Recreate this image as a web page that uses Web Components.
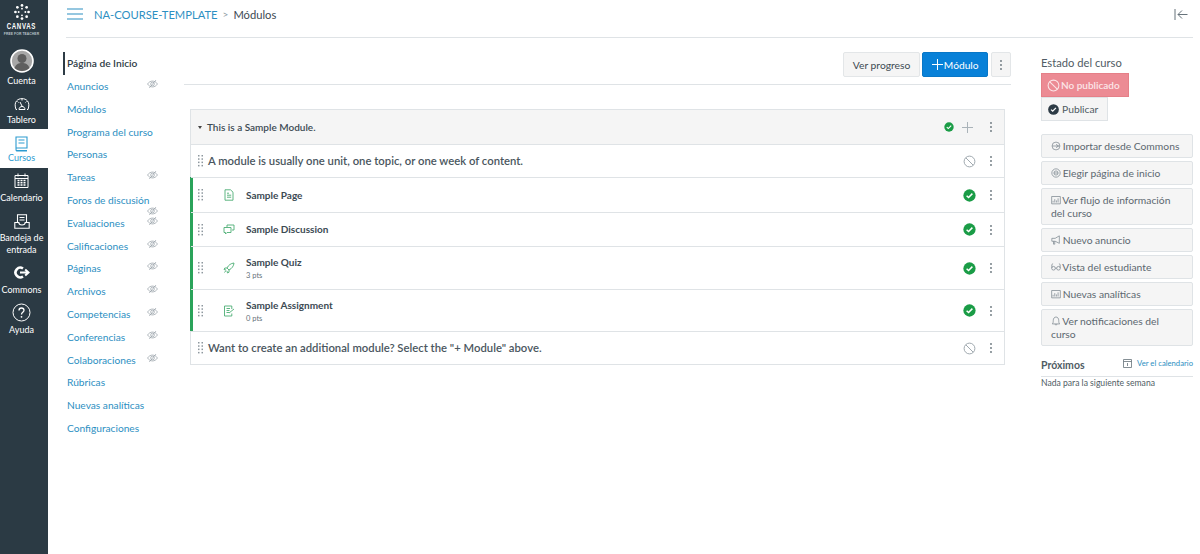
<!DOCTYPE html>
<html lang="es"><head><meta charset="utf-8"><title>Módulos</title>
<style>
html,body{margin:0;height:100%;background:#fff;font-family:Lato,"Open Sans",sans-serif;color:#2d3b45;overflow:hidden}
</style></head><body>
<app-shell>
  <global-nav slot="global"></global-nav>
  <course-header slot="header"></course-header>
  <course-nav slot="nav"></course-nav>
  <modules-main slot="main"></modules-main>
  <course-aside slot="aside"></course-aside>
</app-shell>
<script>
const I={
 eye:`<svg viewBox="0 0 12 10" width="11" height="10" fill="none" stroke="#98a2a9" stroke-width=".8"><path d="M.6 5C2 2.800 4 1.800 6 1.800S10 2.800 11.400 5C10 7.200 8 8.200 6 8.200S2 7.200.6 5Z"/><circle cx="6" cy="5" r="2"/><path d="M2.500 9.300 9.800.7"/></svg>`,
 check:`<svg viewBox="0 0 14 14" width="13" height="13"><circle cx="7" cy="7" r="6.600" fill="#1a9c46"/><path d="M3.900 7.200 6 9.200 10.100 5" fill="none" stroke="#fff" stroke-width="1.600"/></svg>`,
 ban:`<svg viewBox="0 0 14 14" width="13" height="13" fill="none" stroke="#98a2a9" stroke-width="1"><circle cx="7" cy="7" r="5.800"/><path d="M3 3l8 8"/></svg>`,
 kebab:`<svg viewBox="0 0 4 12" width="4" height="12" fill="#66727a"><circle cx="2" cy="2" r=".9"/><circle cx="2" cy="6" r=".9"/><circle cx="2" cy="10" r=".9"/></svg>`,
 drag:`<svg viewBox="0 0 6 12" width="6" height="12" fill="#8d979e"><rect x="0" y="0" width="1.500" height="1.500"/><rect x="3.500" y="0" width="1.500" height="1.500"/><rect x="0" y="3.300" width="1.500" height="1.500"/><rect x="3.500" y="3.300" width="1.500" height="1.500"/><rect x="0" y="6.600" width="1.500" height="1.500"/><rect x="3.500" y="6.600" width="1.500" height="1.500"/><rect x="0" y="9.900" width="1.500" height="1.500"/><rect x="3.500" y="9.900" width="1.500" height="1.500"/></svg>`,
 page:`<svg viewBox="0 0 12 12" width="12" height="12" fill="none" stroke="#4cae74" stroke-width=".9"><path d="M2 .8h5.500L10 3.200v8H2zM4 4.200h2M4 6.200h4.200M4 8.200h4.200"/></svg>`,
 disc:`<svg viewBox="0 0 12 12" width="12" height="12" fill="none" stroke="#4cae74" stroke-width=".9"><path d="M4 3V1h7v5H9M1 3.500h7v5H4L2.500 10V8.500H1z"/></svg>`,
 quiz:`<svg viewBox="0 0 12 12" width="12" height="12" fill="none" stroke="#4cae74" stroke-width=".9"><path d="M11 1C8 1.300 5.500 3 4 6l2 2c3-1.500 4.700-4 5-7ZM4 6H1.800L1 7.500l2 .5M6 8v2.200L4.500 11 4 9M3 8.500 1.500 10.500"/></svg>`,
 assign:`<svg viewBox="0 0 12 12" width="12" height="12" fill="none" stroke="#4cae74" stroke-width=".9"><path d="M8.800 4V1H1.500v10h7.300V8.500M3.500 3.500h3.500M3.500 5.500h3M3.500 7.500h2.500M6 8l5-4"/></svg>`,
 import:`<svg viewBox="0 0 12 12" width="10" height="10" fill="none" stroke="#7d888f" stroke-width=".9"><circle cx="6" cy="6" r="4.700"/><path d="M1.500 6h9M6 4l3 2-3 2"/></svg>`,
 home:`<svg viewBox="0 0 12 12" width="10" height="10" fill="none" stroke="#7d888f" stroke-width=".9"><circle cx="6" cy="6" r="5"/><circle cx="6" cy="6" r="2.500"/><path d="M3.500 6h5"/></svg>`,
 chart:`<svg viewBox="0 0 12 12" width="10" height="10" fill="none" stroke="#7d888f" stroke-width=".9"><path d="M.8 1.800h10.400v8.800H.8zM2.500 9V7M4.500 9V5M6.500 9V6.500M8.500 9V4"/></svg>`,
 horn:`<svg viewBox="0 0 12 12" width="10" height="10" fill="none" stroke="#7d888f" stroke-width=".9"><path d="M1 4h4l5-3v9L5 7.500H1zM3 7.500V11h1.500V7.500"/></svg>`,
 glasses:`<svg viewBox="0 0 12 12" width="10" height="10" fill="none" stroke="#7d888f" stroke-width=".9"><circle cx="3" cy="7.500" r="2.200"/><circle cx="9" cy="7.500" r="2.200"/><path d="M5.200 7.500h1.600M1 7V3l1.500-1M11 7V3L9.500 2"/></svg>`,
 bell:`<svg viewBox="0 0 12 12" width="10" height="10" fill="none" stroke="#7d888f" stroke-width=".9"><path d="M1.500 9.500c1-1 1.200-2 1.200-4C2.700 3 4 1.200 6 1.200S9.300 3 9.300 5.500c0 2 .2 3 1.200 4zM4.800 9.800c.2 1.300 2.200 1.300 2.400 0"/></svg>`,
};
function def(name,css,html){customElements.define(name,class extends HTMLElement{
  constructor(){super();this.attachShadow({mode:"open"}).innerHTML=`<style>${css}</style>`+(typeof html==="function"?html(this):html)}
})}

def("app-shell",`
 :host{display:grid;grid-template-columns:48px 18px 118px 857px 152px 7px;grid-template-rows:38px 1fr;height:554px;width:1200px}
 .g{grid-row:1/3;grid-column:1;display:flex}
 .hh{grid-column:2/6;grid-row:1;padding-left:18px}
 .n{grid-column:2/4;grid-row:2}
 .m{grid-column:4;grid-row:2}
 .a{grid-column:5;grid-row:2}
`,`<div class="g"><slot name="global"></slot></div><div class="hh"><slot name="header"></slot></div>
<div class="n"><slot name="nav"></slot></div><div class="m"><slot name="main"></slot></div><div class="a"><slot name="aside"></slot></div>`);

def("global-item",`
 :host{display:flex;flex-direction:column;align-items:center;color:#fff;font-size:9px;line-height:12px;text-align:center;box-sizing:border-box;width:48px;padding-right:5px;white-space:nowrap}
 :host([active]){background:#fff;color:#2d9bd0}
 .i{display:flex;align-items:center;justify-content:center}
`,`<div class="i"><slot name="icon"></slot></div><slot></slot>`);

def("global-nav",`
 :host{display:flex;flex-direction:column;width:48px;background:#2b3a44;height:554px;color:#fff}
 .logo{height:47px;width:43px;display:flex;flex-direction:column;align-items:center;padding-top:4px;box-sizing:border-box}
 .wm{font:700 8.500px/9px "Liberation Sans",sans-serif;letter-spacing:.9px;transform:scaleX(.72);margin-top:2px;white-space:nowrap}
 .sub{font:700 3.400px/4px "Liberation Sans",sans-serif;letter-spacing:.05px;color:#b8c2c8;margin-top:1px;white-space:nowrap}
 svg{display:block}
`,`<div class="logo"><svg viewBox="0 0 20 20" width="16" height="16" fill="#fff"><circle cx="10" cy="1.800" r="1.700"/><circle cx="15.800" cy="4.200" r="1.700"/><circle cx="18.200" cy="10" r="1.700"/><circle cx="15.800" cy="15.800" r="1.700"/><circle cx="10" cy="18.200" r="1.700"/><circle cx="4.200" cy="15.800" r="1.700"/><circle cx="1.800" cy="10" r="1.700"/><circle cx="4.200" cy="4.200" r="1.700"/><circle cx="10" cy="5.800" r="1.200"/><circle cx="14.200" cy="10" r="1.200"/><circle cx="10" cy="14.200" r="1.200"/><circle cx="5.800" cy="10" r="1.200"/></svg><div class="wm">CANVAS</div><div class="sub">FREE FOR TEACHER</div></div>

<global-item style="height:38px;margin-top:1px;padding-top:1px"><svg slot="icon" width="24" height="24" viewBox="0 0 24 24"><circle cx="12" cy="12" r="11" fill="#a7a7a7" stroke="#fff" stroke-width="1.600"/><circle cx="12" cy="9.500" r="4.500" fill="#5f5f5f"/><path d="M4.500 19c1.500-4 4-5 7.500-5s6 1 7.500 5c-4 4-11 4-15 0Z" fill="#5f5f5f"/></svg><span style="margin-top:2px">Cuenta</span></global-item>

<global-item style="height:43px;padding-top:11px"><svg slot="icon" width="16" height="14" viewBox="0 0 16 14" fill="none" stroke="#fff" stroke-width="1"><path d="M3 12.500H2C.8 9 .8 6 2.500 4 5 .8 11 .8 13.500 4c1.700 2 1.700 5 .5 8.500h-1"/><path d="M5 12.500c0-2 1.500-3 3-3s3 1 3 3zM6 5l2.500 5M8 2v1.500M3.500 4.500l1 1M12.500 4.500l-1 1"/></svg><span style="margin-top:3px">Tablero</span></global-item>

<global-item active style="height:39px;padding-top:7px"><svg slot="icon" width="13" height="16" viewBox="0 0 13 16" fill="none" stroke="#2d9bd0" stroke-width="1.100"><path d="M1 1h11v11H1zM1 12c0 3 0 3 2 3h9M1 14.500h11M3.500 4h6M3.500 7h6"/></svg><span>Cursos</span></global-item>

<global-item style="height:41px;padding-top:5px"><svg slot="icon" width="15" height="15" viewBox="0 0 15 15" fill="none" stroke="#fff" stroke-width="1"><path d="M1 2.500h13v12H1zM1 5.500h13M4 .5v3M11 .5v3"/><path d="M3.500 7.500h2M6.500 7.500h2M9.500 7.500h2M3.500 9.800h2M6.500 9.800h2M9.500 9.800h2M3.500 12h2M6.500 12h2M9.500 12h2" stroke-width="1.400"/></svg><span style="margin-top:4px">Calendario</span></global-item>

<global-item style="height:53px;padding-top:5px"><svg slot="icon" width="16" height="15" viewBox="0 0 16 15" fill="none" stroke="#fff" stroke-width="1.100"><path d="M3.500 8V.7h9V8M5.500 3.500h5M5.500 6h5M.8 8.500h4c0 2 1 2.500 3.200 2.500s3.200-.5 3.200-2.500h4v5.700H.8z"/></svg><span style="margin-top:3px">Bandeja de<br>entrada</span></global-item>

<global-item style="height:39px;padding-top:4px"><svg slot="icon" width="16" height="13" viewBox="0 0 16 13" fill="none" stroke="#fff" stroke-width="2.600"><path d="M9 2.500A4.800 4.800 0 1 0 9 10.500"/><path d="M6 6.500h8M11.200 3.500l3.300 3-3.300 3" stroke-width="2"/></svg><span style="margin-top:5px">Commons</span></global-item>

<global-item style="height:40px;padding-top:2px"><svg slot="icon" width="19" height="19" viewBox="0 0 19 19" fill="none" stroke="#fff" stroke-width="1"><circle cx="9.500" cy="9.500" r="8.500"/><path d="M7 7.500C7 5.800 8.200 5 9.500 5S12 5.800 12 7.300c0 2-2.500 2-2.500 4.200" stroke-width="1.300"/><circle cx="9.500" cy="13.800" r=".9" fill="#fff" stroke="none"/></svg><span style="margin-top:2px">Ayuda</span></global-item>`);

def("course-header",`
 :host{display:flex;align-items:center;height:37px;border-bottom:1px solid #dfe3e6;font-size:11.200px;color:#3c4a53}
 a{color:#2d8fc2;text-decoration:none;margin-left:11px}
 .sep{color:#8d99a1;margin:0 5px;font-size:10px}
 .end{margin-left:auto;margin-right:5px;display:block}
 .burger{display:block;margin-left:1px}
 .row{display:flex;align-items:center;width:100%;margin-top:-9px}
`,`<div class="row"><svg class="burger" width="16" height="12" viewBox="0 0 16 12" stroke="#2d8fc2" stroke-width="1.100"><path d="M0 1h16M0 6h16M0 11h16"/></svg><a>NA-COURSE-TEMPLATE</a><span class="sep">&gt;</span><span>Módulos</span>
<svg class="end" width="14" height="11" viewBox="0 0 14 11" fill="none" stroke="#66727a" stroke-width="1"><path d="M1 0v11M13.500 5.500H4M8 1.500 4 5.500l4 4"/></svg></div>`);

def("nav-link",`
 :host{display:block;position:relative;height:22.800px;line-height:22.800px;font-size:10.200px;padding-left:4px;color:#2d8fc2;white-space:nowrap}
 :host([current]){color:#2d3b45;box-shadow:inset 2px 0 0 #2d3b45;font-weight:600}
 .e{position:absolute;left:84px;top:var(--eye-top,4px);display:block;line-height:0}
`,`<slot></slot><span class="e"><slot name="eye"></slot></span>`);

customElements.define("course-nav",class extends HTMLElement{
 constructor(){super();
  const list=[["Página de Inicio",0],["Anuncios",1],["Módulos",0],["Programa del curso",0],["Personas",0],["Tareas",1],["Foros de discusión",2],["Evaluaciones",1],["Calificaciones",1],["Páginas",1],["Archivos",1],["Competencias",1],["Conferencias",1],["Colaboraciones",1],["Rúbricas",0],["Nuevas analíticas",0],["Configuraciones",0]];
  this.attachShadow({mode:"open"}).innerHTML=`<style>:host{display:block;padding:14.300px 0 0 15px}</style>`+list.map((l,i)=>`<nav-link ${i==0?"current":""} ${l[1]==2?'style="--eye-top:17.400px"':''}>${l[0]}${l[1]?`<span slot="eye">${I.eye}</span>`:""}</nav-link>`).join("");
 }});

def("tool-btn",`
 :host{display:inline-flex;align-items:center;justify-content:center;height:25px;box-sizing:border-box;border:1px solid #e3e6e8;background:#f5f5f5;color:#3c4a53;font-size:10.300px;border-radius:2px;padding:0 9px}
 :host([primary]){background:#0881d8;color:#fff;border-color:#0877c7;font-size:10.200px;padding:0 8.500px}
 :host([icon]){padding:0;width:20px}
`,`<slot></slot>`);

def("module-row",`
 :host{display:flex;align-items:center;box-sizing:border-box;border-top:1px solid #dfe3e6;padding-left:7px;height:var(--h,34px)}
 :host([pub]){box-shadow:-1px 0 0 #2aa35a,inset 2px 0 0 #2aa35a}
 .d{display:flex;width:10px}
 .ic{display:flex;width:12px;margin:0 11px 0 15px}
 .t{flex:1;min-width:0;display:flex;flex-direction:column}
 .r{display:flex;align-items:center;gap:13px;padding-right:11px}
 .k{display:flex}
`,(el)=>{
 const kind=el.getAttribute("kind");
 const st=el.getAttribute("status")=="ban"?I.ban:I.check;
 return `<span class="d">${I.drag}</span>${kind?`<span class="ic">${I[kind]}</span>`:""}<div class="t"><slot></slot></div><div class="r">${st}<span class="k">${I.kebab}</span></div>`});

def("modules-main",`
 :host{display:block;padding:14px 30px 0 0}
 .bar{display:flex;justify-content:flex-end;gap:2px;padding-bottom:7px;border-bottom:1px solid #dfe3e6}
 .k{margin-left:1px}
 .plus{display:block;margin-right:1px}
 .card{margin:24px 0 0 6px;width:815px;border:1px solid #dfe3e6;box-sizing:border-box}
 .head{display:flex;align-items:center;height:34px;background:#f5f5f5;padding:0 11px 0 7px;font-size:10px;font-weight:600;color:#3c4a53}
 .head .ttl{flex:1}
 .tri{width:0;height:0;border:2.500px solid transparent;border-top:3px solid #444;border-bottom:0;margin-right:5px}
 .head svg{display:block}
 .head .pl{margin:0 16px 0 8px}
 .sub{font-size:11.300px;font-weight:600;color:#4a565e;margin-bottom:2px}
 .it{font-size:10px;font-weight:700;color:#3c4a53;line-height:12px}
 .one{margin-bottom:1px}
 .pts{font-size:7.500px;color:#66727a;line-height:10px;margin-top:3px}
`,`<div class="bar"><tool-btn>Ver progreso</tool-btn><tool-btn primary><svg class="plus" width="11" height="11" viewBox="0 0 11 11" stroke="#fff" stroke-width="1"><path d="M5.500 0v11M0 5.500h11"/></svg>Módulo</tool-btn><tool-btn icon class="k">${I.kebab}</tool-btn></div>
<div class="card">
 <div class="head"><span class="tri"></span><span class="ttl">This is a Sample Module.</span>${I.check.replace('width="13" height="13"','width="10" height="10"')}<svg class="pl" width="11" height="11" viewBox="0 0 11 11" stroke="#aab3b9" stroke-width="1"><path d="M5.500 0v11M0 5.500h11"/></svg>${I.kebab}</div>
 <module-row status="ban" style="--h:33px"><span class="sub">A module is usually one unit, one topic, or one week of content.</span></module-row>
 <module-row pub kind="page" style="--h:35px"><span class="it one">Sample Page</span></module-row>
 <module-row pub kind="disc" style="--h:34px"><span class="it one">Sample Discussion</span></module-row>
 <module-row pub kind="quiz" style="--h:43px"><span class="it">Sample Quiz</span><span class="pts">3 pts</span></module-row>
 <module-row pub kind="assign" style="--h:42px"><span class="it" style="margin-top:1px">Sample Assignment</span><span class="pts">0 pts</span></module-row>
 <module-row status="ban" style="--h:33px"><span class="sub">Want to create an additional module? Select the "+ Module" above.</span></module-row>
</div>`);

def("side-btn",`
 :host{display:block;box-sizing:border-box;border:1px solid #dfe3e6;background:#f5f5f5;color:#5c6870;font-size:10.300px;line-height:13px;padding:4.500px 9px;border-radius:2px;margin-bottom:3px;width:152px}
`,`<slot></slot>`);

def("course-aside",`
 :host{display:block;padding-top:18px;font-size:11.200px;color:#505c64}
 .st{line-height:13px;margin-bottom:4px}
 .np{display:flex;align-items:center;gap:1px;width:88px;height:24px;box-sizing:border-box;background:#ec8b94;border:1px solid #e58088;color:#fbe6e8;font-size:10px;font-weight:600;padding-left:5px}
 .pb{display:flex;align-items:center;gap:3px;width:67px;height:24px;box-sizing:border-box;background:#f5f5f5;border:1px solid #dfe3e6;font-size:10.300px;padding-left:6px;margin-bottom:13px}
 svg{vertical-align:-1.500px}
 side-btn svg{margin-right:-1px}
 .up{display:flex;align-items:flex-end;justify-content:space-between;margin-top:11px;padding-bottom:5px;border-bottom:1px solid #dfe3e6;font-size:10.500px;font-weight:700;width:152px;line-height:12px}
 .up a{font-size:7.700px;font-weight:400;color:#2d8fc2;display:flex;align-items:center;gap:5px;margin-bottom:2px}
 .no{font-size:8.600px;margin-top:1px;color:#505c64}
`,`<div class="st">Estado del curso</div>
<div class="np"><svg viewBox="0 0 14 14" width="13" height="13" fill="none" stroke="#fbe6e8" stroke-width="1.100"><circle cx="7" cy="7" r="5.800"/><path d="M3 3l8 8"/></svg>No publicado</div>
<div class="pb"><svg viewBox="0 0 14 14" width="11" height="11"><circle cx="7" cy="7" r="6.800" fill="#2d3b45"/><path d="M3.900 7.200 6 9.200 10.100 5" fill="none" stroke="#fff" stroke-width="1.600"/></svg>Publicar</div>
<side-btn>${I.import} Importar desde Commons</side-btn>
<side-btn>${I.home} Elegir página de inicio</side-btn>
<side-btn>${I.chart} Ver flujo de información del curso</side-btn>
<side-btn>${I.horn} Nuevo anuncio</side-btn>
<side-btn>${I.glasses} Vista del estudiante</side-btn>
<side-btn>${I.chart} Nuevas analíticas</side-btn>
<side-btn>${I.bell} Ver notificaciones del curso</side-btn>
<div class="up"><span>Próximos</span><a><svg width="9" height="9" viewBox="0 0 9 9" fill="none" stroke="#66727a" stroke-width=".8"><path d="M.5.5h8v8h-8zM.5 2.500h8M4.500 4v3"/></svg>Ver el calendario</a></div>
<div class="no">Nada para la siguiente semana</div>`);
</script>
</body></html>
